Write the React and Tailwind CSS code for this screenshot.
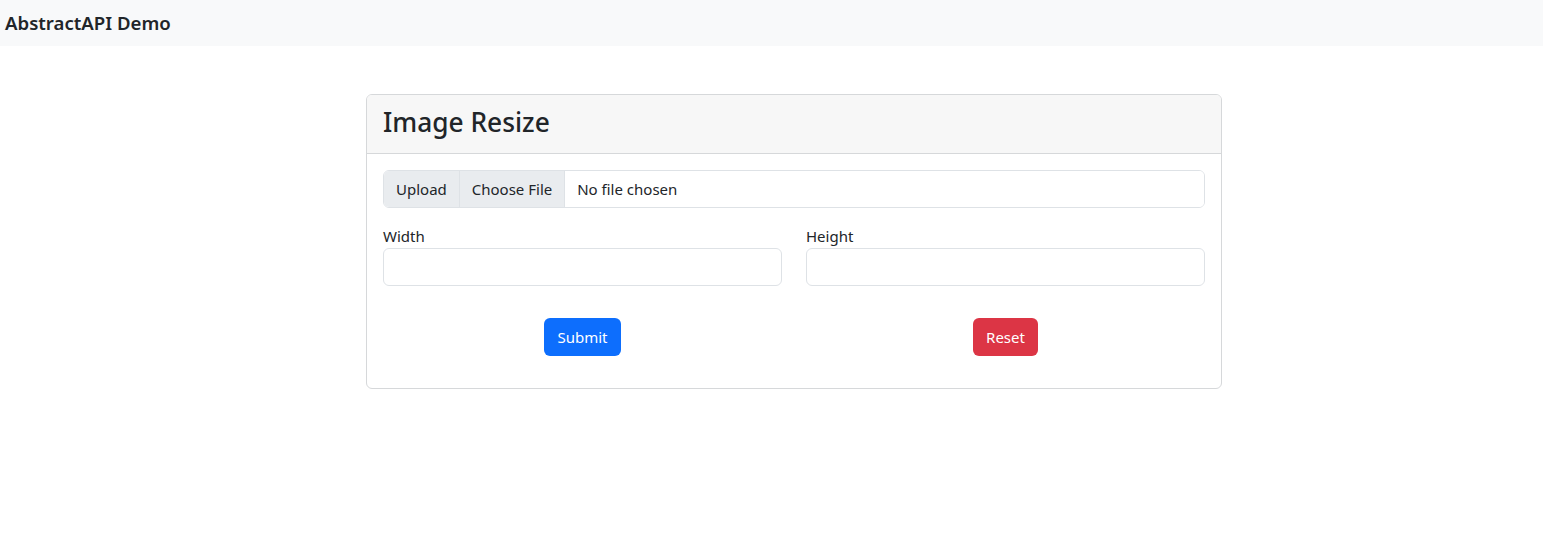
export default function App() {
  return (
    <div className="min-h-[539px] bg-white text-[#212529] font-['Noto_Sans','Open_Sans',sans-serif]">
      <nav className="h-[46px] bg-[#f8f9fa] flex items-center px-[5px]">
        <span className="text-[18.6px] font-semibold leading-[30px]">AbstractAPI Demo</span>
      </nav>

      <div className="ml-[366px] mt-12 w-[856px] border border-[#d6d8da] rounded-[6px] overflow-hidden">
        <div className="bg-[#f7f7f7] border-b border-[#d6d8da] px-4 pt-[10px] h-[59px]">
          <h3 className="text-[26.3px] font-medium leading-[34px]">Image Resize</h3>
        </div>

        <div className="p-4 pb-8">
          <div className="flex h-[38px] text-[15px] border border-[#dee2e6] rounded-[6px] overflow-hidden mb-4">
            <span className="flex items-center px-3 bg-[#e9ecef] border-r border-[#dee2e6]">Upload</span>
            <span className="flex items-center px-3 bg-[#e9ecef] border-r border-[#dee2e6]">Choose File</span>
            <span className="flex items-center px-3 bg-white flex-1">No file chosen</span>
          </div>

          <div className="grid grid-cols-2 gap-x-6">
            <div>
              <label className="block text-[15px] leading-6">Width</label>
              <input type="text" className="block w-full h-[38px] border border-[#dee2e6] rounded-[6px] px-3 outline-none" />
            </div>
            <div>
              <label className="block text-[15px] leading-6">Height</label>
              <input type="text" className="block w-full h-[38px] border border-[#dee2e6] rounded-[6px] px-3 outline-none" />
            </div>
            <div className="flex justify-center mt-8">
              <button className="h-[38px] px-[13px] rounded-[6px] bg-[#0d6efd] text-white text-[15px]">Submit</button>
            </div>
            <div className="flex justify-center mt-8">
              <button className="h-[38px] px-[13px] rounded-[6px] bg-[#dc3545] text-white text-[15px]">Reset</button>
            </div>
          </div>
        </div>
      </div>
    </div>
  );
}
